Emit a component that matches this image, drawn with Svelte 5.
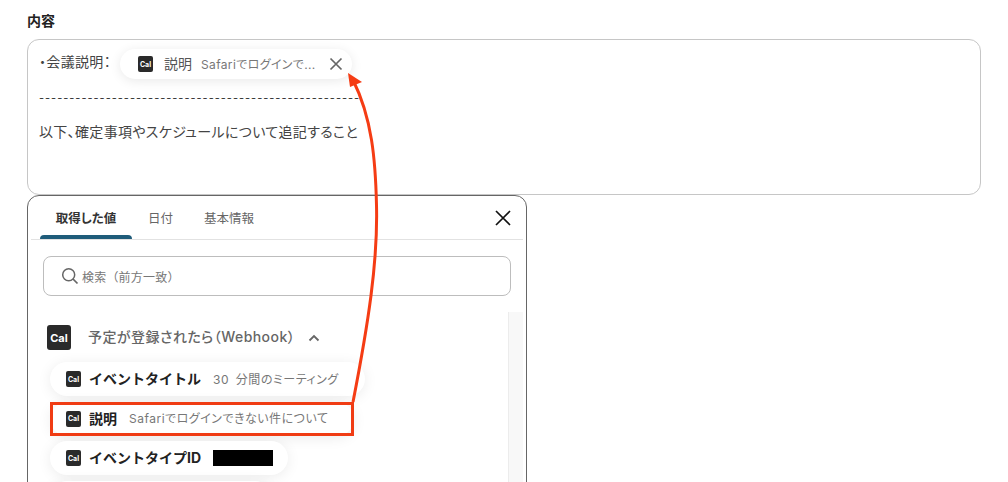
<script lang="ts">
  const rows = [
    { name: 'イベントタイトル', value: '30 分間のミーティング' },
    { name: '説明', value: 'Safariでログインできない件について' },
    { name: 'イベントタイプID', value: '', redacted: true }
  ]
  const dashes = '-'.repeat(53)
</script>

{#snippet cal(cls)}
  <span class="cal {cls}">Cal</span>
{/snippet}

<div class="page">
  <div class="label">内容</div>

  <div class="editor">
    <div class="line first">
      <span class="intro">・会議説明：</span>
      <span class="chip">
        {@render cal('small')}
        <span class="chip-name">説明</span>
        <span class="chip-value">Safariでログインで...</span>
        <svg class="chip-x" width="14" height="14" viewBox="0 0 14 14">
          <path d="M1.5 1.5L12.5 12.5M12.5 1.5L1.5 12.5" stroke="#666" stroke-width="1.7" fill="none" />
        </svg>
      </span>
    </div>
    <div class="line dashes">{dashes}</div>
    <div class="line notes">以下、確定事項やスケジュールについて追記すること</div>
  </div>

  <div class="panel">
    <div class="tabs">
      <div class="tab active">取得した値</div>
      <div class="tab">日付</div>
      <div class="tab">基本情報</div>
      <svg class="close" width="16" height="16" viewBox="0 0 16 16">
        <path d="M1 1L15 15M15 1L1 15" stroke="#111" stroke-width="1.7" fill="none" />
      </svg>
    </div>

    <div class="search">
      <svg width="18" height="18" viewBox="0 0 18 18">
        <circle cx="7.7" cy="7.7" r="6" stroke="#666" stroke-width="1.5" fill="none" />
        <path d="M12 12L16.5 16.5" stroke="#666" stroke-width="1.7" fill="none" />
      </svg>
      <span>検索（前方一致）</span>
    </div>

    <div class="body">
      <div class="list">
        <div class="group">
          {@render cal('big')}
          <span class="group-name">予定が登録されたら（Webhook）</span>
          <svg width="12" height="8" viewBox="0 0 12 8">
            <path d="M1.5 6.5L6 2L10.5 6.5" stroke="#666" stroke-width="1.8" fill="none" />
          </svg>
        </div>
        {#each rows as row}
          <div class="row">
            {@render cal('small')}
            <span class="row-name">{row.name}</span>
            {#if row.redacted}
              <span class="redacted"></span>
            {:else}
              <span class="row-value">{row.value}</span>
            {/if}
          </div>
        {/each}
        <div class="row stub"></div>
      </div>
      <div class="scrollbar"></div>
    </div>
  </div>

  <!-- annotation drawn over the page -->
  <div class="highlight"></div>
  <svg class="arrow" width="1008" height="482" viewBox="0 0 1008 482">
    <path d="M353 402C368 325 378 262 376.500 205C375.500 160 372 118 353 80" stroke="#f53c14" stroke-width="3" fill="none" />
    <path d="M348 73L362 82L350 87Z" fill="#f53c14" />
  </svg>
</div>

<style>
  :global(body) {
    margin: 0;
    background: #fff;
    overflow: hidden;
  }

  .page {
    position: relative;
    width: 1008px;
    height: 482px;
    overflow: hidden;
    box-sizing: border-box;
    padding: 12px 27px 0;
    font-family: Inter, 'Noto Sans CJK JP', sans-serif;
    font-feature-settings: 'palt';
    color: #333;
  }

  .label {
    font-size: 14px;
    font-weight: 700;
    line-height: 17px;
    color: #222;
    margin-bottom: 10px;
  }

  .editor {
    box-sizing: border-box;
    width: 954px;
    height: 156px;
    border: 1px solid #c6c6c6;
    border-radius: 12px;
    padding: 9px 11px 0;
    font-size: 14px;
    letter-spacing: 0.33px;
    color: #444;
  }

  .line {
    white-space: nowrap;
  }

  .first {
    display: flex;
    align-items: center;
    height: 30px;
  }

  .intro {
    width: 81px;
    margin-top: -6px;
  }

  .chip {
    display: flex;
    align-items: center;
    box-sizing: border-box;
    width: 232px;
    height: 30px;
    padding: 0 9px 0 18px;
    border-radius: 15px;
    background: #fff;
    box-shadow: 0 2px 12px rgba(0, 0, 0, 0.09);
    letter-spacing: 0;
  }

  .cal {
    display: flex;
    align-items: center;
    justify-content: center;
    flex: none;
    background: #2a2a2a;
    color: #fff;
    font-weight: 700;
    letter-spacing: 0;
  }

  .cal.small {
    width: 15px;
    height: 16px;
    border-radius: 2px;
    font-size: 7px;
  }

  .cal.big {
    width: 24px;
    height: 25px;
    border-radius: 3px;
    font-size: 11px;
  }

  .chip-name {
    margin: 0 0 2px 11px;
    font-size: 14px;
    color: #555;
  }

  .chip-value {
    margin: 0 0 2px 9px;
    font-size: 12px;
    letter-spacing: 0.35px;
    color: #777;
  }

  .chip-x {
    margin-left: auto;
  }

  .dashes {
    margin-top: 9px;
    height: 20px;
    line-height: 20px;
    font-size: 11px;
    letter-spacing: 1px;
    color: #333;
  }

  .notes {
    margin-top: 14px;
    line-height: 20px;
  }

  .panel {
    box-sizing: border-box;
    width: 500px;
    height: 320px;
    border: 1px solid #666;
    border-radius: 12px;
    padding: 0 3px;
    background: #fff;
  }

  .tabs {
    display: flex;
    align-items: center;
    height: 43px;
    padding: 0 9px;
    border-bottom: 1px solid #e2e2e2;
  }

  .tab {
    position: relative;
    height: 43px;
    line-height: 46px;
    box-sizing: border-box;
    font-size: 12.5px;
    color: #666;
    margin-right: 31px;
  }

  .tab.active {
    width: 92px;
    margin-right: 16px;
    text-align: center;
    font-weight: 700;
    color: #333;
  }

  .tab.active::after {
    content: '';
    position: absolute;
    left: 0;
    right: 0;
    bottom: 0;
    height: 4px;
    border-radius: 4px 4px 0 0;
    background: #1f5c7a;
  }

  .close {
    margin-left: auto;
    margin-right: 3px;
  }

  .search {
    display: flex;
    align-items: center;
    gap: 3px;
    box-sizing: border-box;
    height: 40px;
    margin: 16px 12px 16px;
    padding-left: 17px;
    border: 1px solid #bdbdbd;
    border-radius: 8px;
    font-size: 12px;
    letter-spacing: 0.2px;
    font-feature-settings: normal;
    color: #777;
  }

  .body {
    display: flex;
  }

  .list {
    flex: 1;
    padding: 13px 0 0 19px;
  }

  .scrollbar {
    flex: none;
    width: 14px;
    height: 200px;
    background: #f8f8f8;
    border-left: 1px solid #ececec;
  }

  .group {
    display: flex;
    align-items: center;
    height: 25px;
    margin: 0 0 12px -3px;
    font-size: 14px;
    font-weight: 500;
    letter-spacing: 0.45px;
    color: #666;
  }

  .group-name {
    margin: 0 13px 3px 17px;
    white-space: nowrap;
  }

  .row {
    display: flex;
    align-items: center;
    width: max-content;
    height: 34px;
    margin-bottom: 5.500px;
    padding: 0 26px 0 16px;
    border-radius: 17px;
    background: #fff;
    box-shadow: 0 2px 14px rgba(0, 0, 0, 0.08);
  }

  .row-name {
    margin: 0 0 2px 8px;
    font-size: 14px;
    font-weight: 700;
    font-feature-settings: normal;
    color: #222;
  }

  .row-value {
    margin: 0 0 2px 12px;
    font-size: 12px;
    letter-spacing: 0.5px;
    word-spacing: 3px;
    color: #777;
  }

  .redacted {
    width: 60px;
    height: 16px;
    margin-left: 12px;
    margin-right: -11px;
    background: #000;
  }

  .stub {
    width: 180px;
  }

  .highlight {
    position: absolute;
    left: 50px;
    top: 402px;
    width: 304px;
    height: 34px;
    box-sizing: border-box;
    border: 3px solid #f03c14;
  }

  .arrow {
    position: absolute;
    left: 0;
    top: 0;
  }
</style>
